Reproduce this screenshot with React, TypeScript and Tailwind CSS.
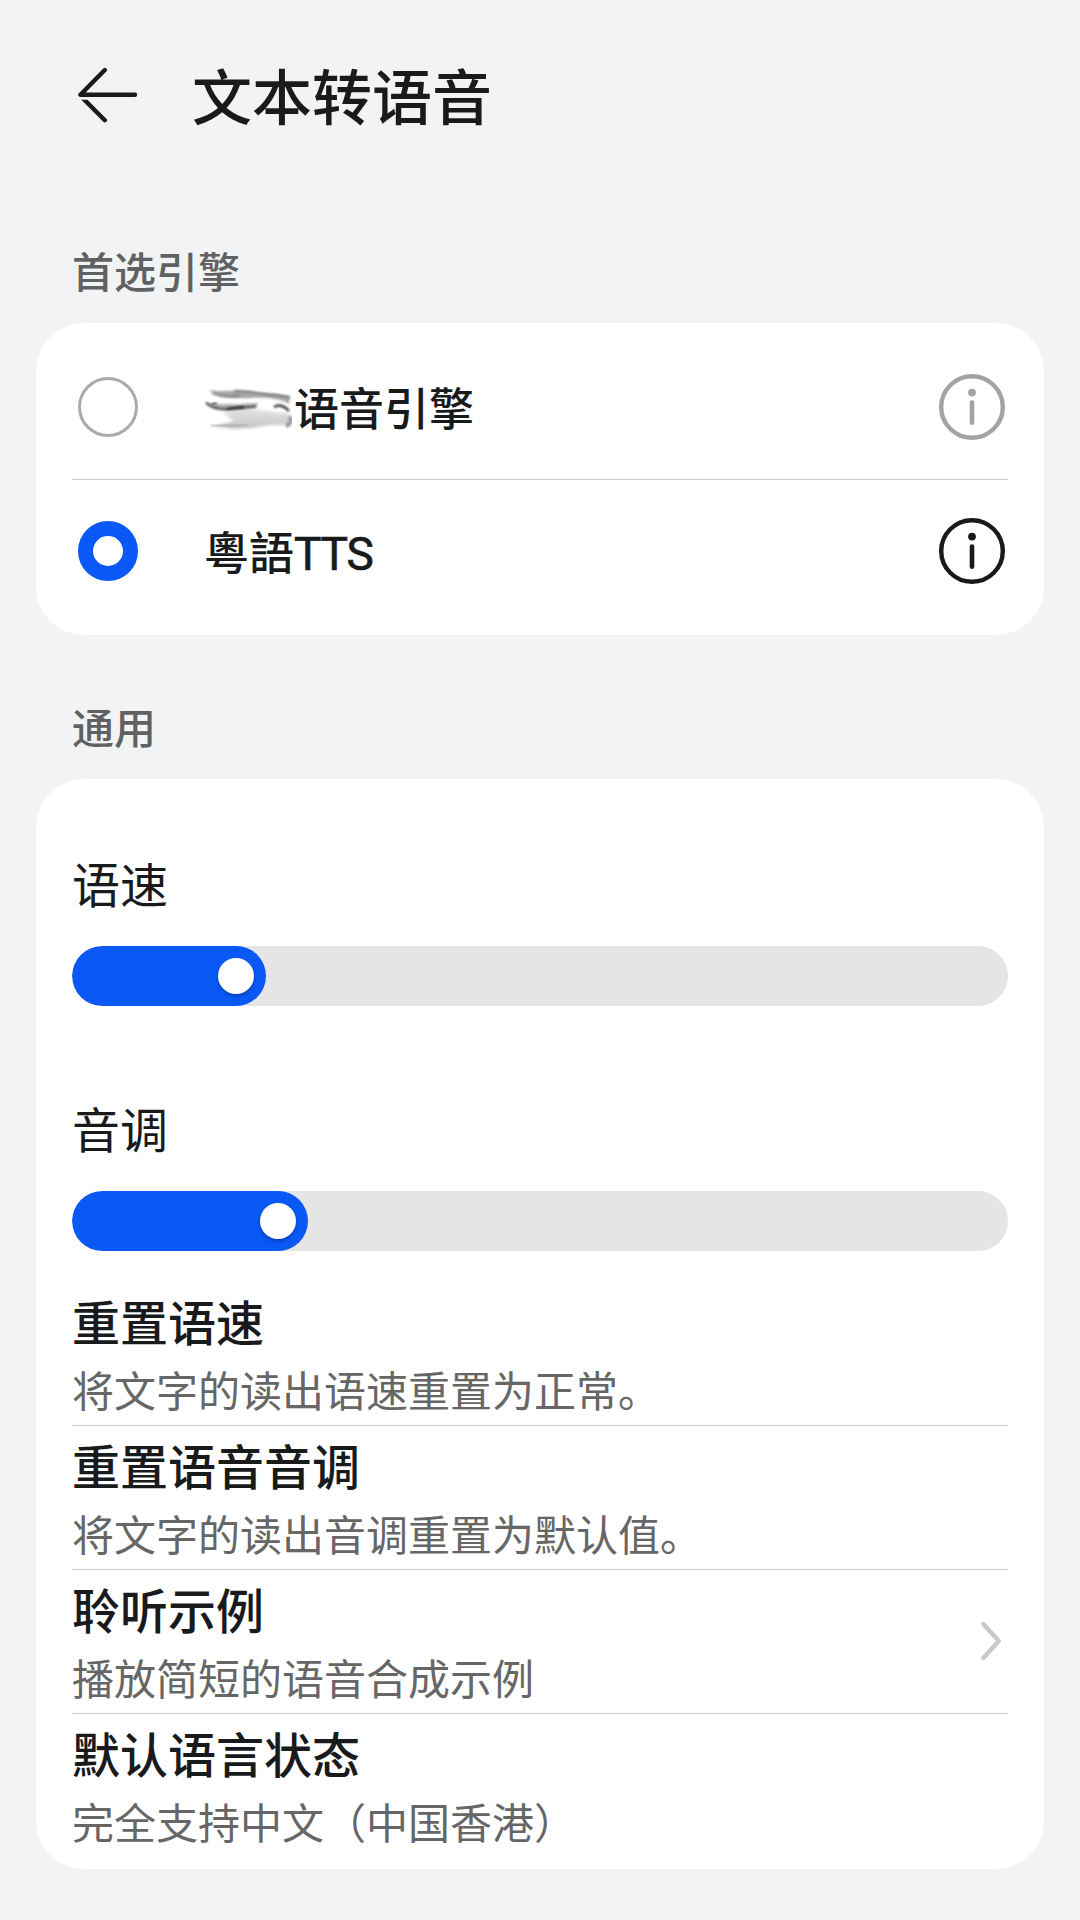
import React from "react";

function BackArrow() {
  return (
    <svg width="60" height="60" viewBox="0 0 60 60" fill="none" stroke="#191a1c" strokeWidth="4.4" strokeLinecap="round" strokeLinejoin="round">
      <clipPath id="lowerBarb">
        <rect x="0" y="34.7" width="60" height="25" />
      </clipPath>
      <path d="M26.8 5L2.4 29.7H57" />
      <path d="M2.6 31L26.8 55.2" clipPath="url(#lowerBarb)" />
    </svg>
  );
}

function InfoIcon({ color }: { color: string }) {
  return (
    <svg width="66" height="66" viewBox="0 0 66 66" fill="none">
      <circle cx="33" cy="33" r="30.8" stroke={color} strokeWidth="4.4" />
      <circle cx="33" cy="18.6" r="3.9" fill={color} />
      <path d="M33 28.5V48.7" stroke={color} strokeWidth="4.6" strokeLinecap="round" />
    </svg>
  );
}

function Smudge() {
  return (
    <svg className="h-[50px] w-[90px] shrink-0" viewBox="0 0 90 50" fill="none">
      <defs>
        <filter id="soft" x="-20%" y="-80%" width="140%" height="260%">
          <feGaussianBlur stdDeviation="1" />
        </filter>
        <filter id="softer" x="-20%" y="-50%" width="140%" height="200%">
          <feGaussianBlur stdDeviation="1.8" />
        </filter>
        <linearGradient id="haze" x1="0" y1="0" x2="0" y2="1">
          <stop offset="0" stopColor="#e4e4e4" />
          <stop offset="1" stopColor="#c4c4c4" />
        </linearGradient>
      </defs>
      <path d="M18 30L40 27L58 28L86 32V43L66 43L48 46L28 47L10 44L30 39Z" fill="url(#haze)" filter="url(#softer)" />
      <path d="M5 8C18 10 30 8 44 9C58 11 74 11 86 14L85 22C76 16 60 15 48 16C32 17 14 16 5 8Z" fill="#a8a8a8" filter="url(#soft)" />
      <path d="M8 11C18 15 28 15 36 13" stroke="#8a8a8a" strokeWidth="2.4" filter="url(#soft)" />
      <path d="M30 9C44 9 56 12 68 13S80 14 86 16" stroke="#7c7c7c" strokeWidth="1.8" filter="url(#soft)" />
      <path d="M1 20C14 23 32 22 54 21L52 26C42 27 26 30 14 28C8 27 4 24 1 20Z" fill="#b2b2b2" filter="url(#soft)" />
      <path d="M2 21C7 25 13 27 22 27S40 25 52 24.5" stroke="#4c4c4c" strokeWidth="1.9" filter="url(#soft)" />
      <path d="M8 22L13 21" stroke="#333333" strokeWidth="1.6" filter="url(#soft)" />
      <path d="M23 27C29 25 34 26 40 25" stroke="#1f1f1f" strokeWidth="1.8" filter="url(#soft)" />
      <path d="M70 25C75 22 81 24 85 29" stroke="#383838" strokeWidth="2.4" filter="url(#soft)" />
      <path d="M7 43.5C20 44 30 44 44 43" stroke="#a4a4a4" strokeWidth="1.6" filter="url(#soft)" />
      <path d="M85 35C88 38 87 42 82 44" stroke="#9a9a9a" strokeWidth="4" filter="url(#soft)" />
    </svg>
  );
}

function Radio({ checked }: { checked: boolean }) {
  return checked ? (
    <span className="size-[60px] shrink-0 rounded-full border-[15px] border-[#0a59f7] bg-white" />
  ) : (
    <span className="size-[60px] shrink-0 rounded-full border-[3px] border-[#ababab] bg-white" />
  );
}

function SectionTitle({ children, className }: { children: React.ReactNode; className: string }) {
  return <h2 className={`pl-[72px] text-[42px] leading-[60px] font-medium text-[#606163] ${className}`}>{children}</h2>;
}

function SliderBar({ fill }: { fill: number }) {
  return (
    <div className="flex h-[60px] overflow-hidden rounded-full bg-[#e5e5e5]">
      <div className="flex h-full items-center justify-end rounded-full bg-[#0a59f7] pr-3" style={{ width: fill }}>
        <span className="size-9 rounded-full bg-white shadow-[0_2px_4px_rgba(0,0,0,0.3)]" />
      </div>
    </div>
  );
}

function Chevron() {
  return (
    <svg className="mb-0.5" width="24" height="42" viewBox="0 0 24 42" fill="none" stroke="#c9c9c9" strokeWidth="4.4" strokeLinecap="round" strokeLinejoin="round">
      <path d="M5.3 4L20.8 21L5.3 38" />
    </svg>
  );
}

const items = [
  { title: "重置语速", sub: "将文字的读出语速重置为正常。" },
  { title: "重置语音音调", sub: "将文字的读出音调重置为默认值。" },
  { title: "聆听示例", sub: "播放简短的语音合成示例", arrow: true },
  { title: "默认语言状态", sub: "完全支持中文（中国香港）" },
];

export default function App() {
  return (
    <div lang="zh-CN" className="flex h-[1920px] w-[1080px] flex-col bg-[#f2f3f5] font-['Noto_Sans_CJK_SC',sans-serif] text-[#191a1c]">
      <header className="flex h-[187px] items-center gap-[54px] pl-[78px]">
        <div className="mt-[3px]">
          <BackArrow />
        </div>
        <h1 className="text-[60px] leading-[80px] font-medium">文本转语音</h1>
      </header>

      <SectionTitle className="h-[136px] pt-[53px]">首选引擎</SectionTitle>
      <section className="mx-9 h-[312px] rounded-[48px] bg-white px-9 py-3">
        <div className="flex h-[144px] items-center pr-[3px] pl-1.5">
          <Radio checked={false} />
          <div className="ml-[66px] flex flex-1 items-center text-[45px] leading-[60px] font-medium">
            <Smudge />
            <span>语音引擎</span>
          </div>
          <InfoIcon color="#a3a3a3" />
        </div>
        <div className="h-px bg-[#c9c9c9]" />
        <div className="flex h-[143px] items-center pr-[3px] pb-px pl-1.5">
          <Radio checked />
          <div className="ml-[66px] flex-1 pt-0.5 text-[45px] leading-[60px] font-medium">
            粵語<span className="font-[Roboto,sans-serif] text-[46px] font-normal tracking-[-1.2px] [-webkit-text-stroke:0.7px_#191a1c]">TTS</span>
          </div>
          <InfoIcon color="#191a1c" />
        </div>
      </section>

      <SectionTitle className="h-[144px] pt-[61px]">通用</SectionTitle>
      <section className="mx-9 h-[1090px] rounded-[48px] bg-white px-9 pt-[73px]">
        <div className="mb-[34px] text-[48px] leading-[60px]">语速</div>
        <SliderBar fill={194} />
        <div className="mt-[91px] mb-[34px] text-[48px] leading-[60px]">音调</div>
        <SliderBar fill={236} />
        <div className="mt-[30px]">
          {items.map((it, i) => (
            <div
              key={it.title}
              className={`flex h-[144px] items-center justify-between border-t pr-1.5 ${i === 0 ? "border-transparent" : "border-[#c9c9c9]"}`}
            >
              <div>
                <div className="text-[48px] leading-[60px] font-medium">{it.title}</div>
                <div className="mt-2.5 text-[42px] leading-[58px] text-[#666666]">{it.sub}</div>
              </div>
              {it.arrow && <Chevron />}
            </div>
          ))}
        </div>
      </section>
    </div>
  );
}
